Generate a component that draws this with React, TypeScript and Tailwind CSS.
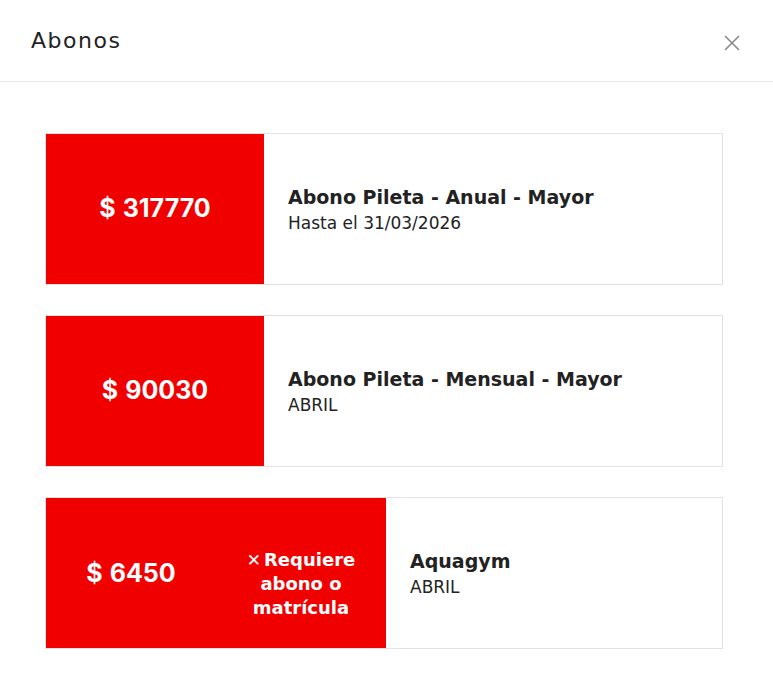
import React from "react";

const inter = { fontFamily: "Inter, 'Open Sans', sans-serif" };
const deja = { fontFamily: "'DejaVu Sans', 'Noto Sans', sans-serif" };

function Price({ value }: { value: string }) {
  return (
    <span className="inline-flex items-baseline gap-[7px]" style={inter}>
      <span>$</span>
      <span>{value}</span>
    </span>
  );
}

function Card({ price, title, sub, requires }: { price: string; title: string; sub: string; requires?: boolean }) {
  return (
    <div className="flex h-[152px] border border-[#e2e2e2] bg-white">
      {requires ? (
        <div className="flex w-[340px] items-center bg-[#f10000] text-white">
          <div className="w-1/2 text-center text-[25px] font-bold">
            <Price value={price} />
          </div>
          <div className="w-1/2 pt-[22px] text-center text-[18px] font-bold leading-[24px]" style={deja}>
            <span className="mr-[3px] text-[17px]">✕</span>Requiere
            <br />
            abono o
            <br />
            matrícula
          </div>
        </div>
      ) : (
        <div className="flex w-[218px] items-center justify-center bg-[#f10000] text-[25px] font-bold text-white">
          <Price value={price} />
        </div>
      )}
      <div className="flex flex-col justify-center pl-[24px] text-[#222]" style={deja}>
        <div className="text-[19px] font-bold leading-[28px]">{title}</div>
        <div className="text-[17px] leading-[24px]">{sub}</div>
      </div>
    </div>
  );
}

export default function App() {
  return (
    <div className="h-[699px] w-[773px] bg-white">
      <div className="flex h-[82px] items-center justify-between border-b border-[#e9e9e9] pl-[31px] pr-[32px]">
        <div className="text-[22px] tracking-[1.5px] text-[#222]" style={deja}>Abonos</div>
        <svg width="18" height="18" viewBox="0 0 18 18" className="mt-[4px]">
          <path d="M2 2 L16 16 M16 2 L2 16" stroke="#8a8a8a" strokeWidth="1.6" fill="none" />
        </svg>
      </div>
      <div className="flex flex-col gap-[30px] pl-[45px] pr-[50px] pt-[51px]">
        <Card price="317770" title="Abono Pileta - Anual - Mayor" sub="Hasta el 31/03/2026" />
        <Card price="90030" title="Abono Pileta - Mensual - Mayor" sub="ABRIL" />
        <Card price="6450" title="Aquagym" sub="ABRIL" requires />
      </div>
    </div>
  );
}
